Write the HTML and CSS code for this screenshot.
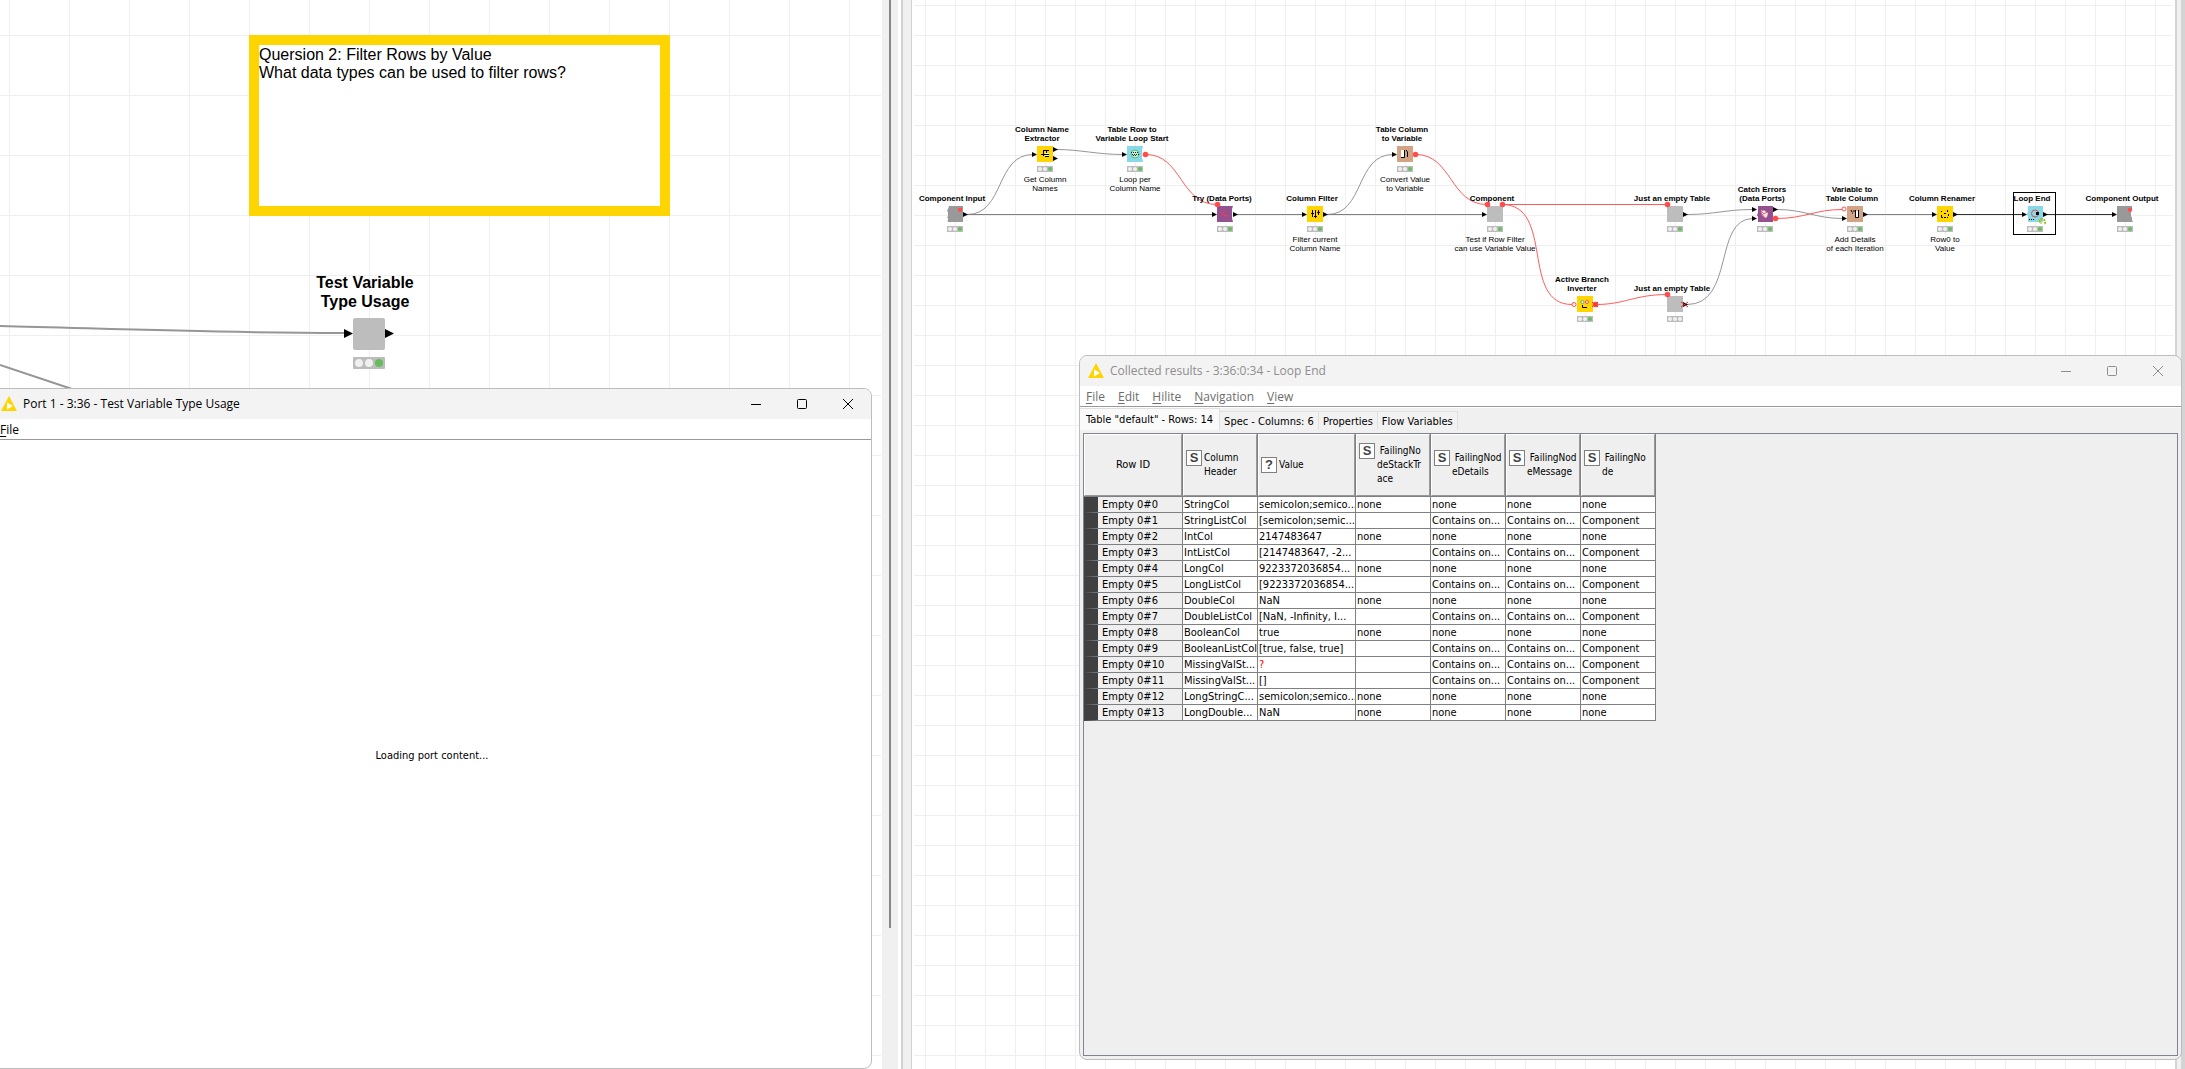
FILE: index.html
```html
<!DOCTYPE html>
<html lang="en">
<head>
<meta charset="utf-8">
<title>Workflow editor</title>
<link rel="stylesheet" href="styles.css">
</head>
<body>
<div class="desk">
  <section class="canvas canvas-left">
    <svg class="layer" aria-hidden="true">
      <g fill="none" stroke="#969696" stroke-width="2">
        <path d="M0 326 C120 329 220 333 344 333"/>
        <path d="M0 365 L72 389"/>
      </g>
      <g fill="#000"><path d="M344 329 l9 4.500 l-9 4.500z M385 329 l9 4.500 l-9 4.500z"/></g>
    </svg>
    <div class="note">Quersion 2: Filter Rows by Value<br>What data types can be used to filter rows?</div>
    <div class="node node-big" style="left:289px;top:273px">
      <div class="title">Test Variable<br>Type Usage</div>
      <div class="box"></div>
      <div class="status"><i></i><i></i><i class="on"></i></div>
    </div>
    <div class="window window-port">
      <header class="titlebar">
        <svg class="logo" viewBox="0 0 16 16"><path fill="#ffd500" d="M8 0L16 15H0z"/><path fill="#fff" d="M6 6.500l6 3.500l-6 3.500z"/></svg>
        <h1>Port 1 - 3:36 - Test Variable Type Usage</h1>
        <button aria-label="Minimize"><svg viewBox="0 0 12 12"><path d="M1 6.500h10"/></svg></button>
        <button aria-label="Maximize"><svg viewBox="0 0 12 12"><rect x="1.500" y="1.500" width="9" height="9" rx="1"/></svg></button>
        <button aria-label="Close"><svg viewBox="0 0 12 12"><path d="M1 1l10 10M11 1L1 11"/></svg></button>
      </header>
      <nav class="menu"><button><u>F</u>ile</button></nav>
      <p class="loading">Loading port content...</p>
    </div>
  </section>
  <div class="scroll"></div>
  <div class="split"></div>
  <section class="canvas canvas-right">
    <svg class="layer" viewBox="912 0 1264 1069" aria-hidden="true">
      <g fill="none" stroke="#969696">
        <path d="M967 214.500 C1005 214.500 995 154.500 1033 154.500 M1057 149.500 C1080 149.500 1097 154.500 1123 154.500"/>
        <path d="M1327 214.500 C1365 214.500 1355 154.500 1393 154.500"/>
        <path d="M1687 214.500 C1715 214.500 1725 209.500 1753 209.500 M1687 304.500 C1735 304.500 1713 218.500 1753 218.500"/>
        <path d="M1777 209.500 C1805 209.500 1815 218.500 1843 218.500"/>
      </g>
      <g fill="none" stroke="#808080">
        <path d="M967 214.500H1213 M1237 214.500H1303 M1327 214.500H1483 M1867 214.500H1933"/>
      </g>
      <path fill="none" stroke="#333" d="M1957 214.500H2023 M2047 214.500H2113"/>
      <g fill="none" stroke="#ff5a5a">
        <path d="M1146 154.500 C1182 154.500 1180 204.500 1217 204.500"/>
        <path d="M1416 154.500 C1452 154.500 1450 204.500 1487 204.500 M1502 204.500H1667 M1502 204.500 C1555 204.500 1520 304.500 1572 304.500"/>
        <path d="M1596 304.500 C1625 304.500 1635 294.500 1667 294.500 M1776 218.500 C1805 218.500 1815 209.500 1842 209.500"/>
      </g>
      <rect x="2013.500" y="192.500" width="42" height="42" fill="none" stroke="#000"/>
    </svg>

    <div class="node" style="left:-17px;top:185px"><div class="title">Component Input</div>
      <svg class="box" viewBox="0 0 16 16"><path fill="#999" d="M2 0H16V16H1Q0 15 1 14V12H0L1 10V6L0 5 1 3Z"/><path fill="#ff4d4d" d="M11 2h4v3l-2 1-2-1z"/></svg>
      <div class="status"><i></i><i></i><i class="on"></i></div></div>

    <div class="node" style="left:73px;top:125px"><div class="title">Column Name<br>Extractor</div>
      <svg class="box" viewBox="0 0 16 16"><path fill="#ffd500" d="M0 0h16v16H0z"/><path fill="#fff" d="M8 7h4v3H8z"/><path fill="none" stroke="#000" d="M6 4.500h6M6.500 4v6M4 8.500h8M9.500 4v3M8 10.500h4"/></svg>
      <div class="status"><i></i><i></i><i class="on"></i></div><div class="desc">Get Column<br>Names</div></div>

    <div class="node" style="left:163px;top:125px"><div class="title">Table Row to<br>Variable Loop Start</div>
      <svg class="box" viewBox="0 0 16 16"><path fill="#87d9e8" d="M0 0h16l-1 4v8l1 4H0z"/><circle cx="8" cy="8" r="4" fill="#c6efd9" stroke="#5ab878"/><path fill="none" stroke="#222" stroke-dasharray="1 1" d="M4 6.500h8M5 8.500h7M6 9.500h4"/></svg>
      <div class="status"><i></i><i></i><i class="on"></i></div><div class="desc">Loop per<br>Column Name</div></div>

    <div class="node" style="left:253px;top:185px"><div class="title">Try (Data Ports)</div>
      <svg class="box" viewBox="0 0 16 16"><path fill="#95508f" d="M0 0h16l-1 3v9l1 4H0z"/><path fill="none" stroke="#ff4040" d="M8 4L5 7.500Q6 10.500 11 10"/></svg>
      <div class="status"><i></i><i></i><i class="on"></i></div></div>

    <div class="node" style="left:343px;top:185px"><div class="title">Column Filter</div>
      <svg class="box" viewBox="0 0 16 16"><path fill="#ffd500" d="M0 0h16v16H0z"/><path fill="none" stroke="#000" d="M5.500 4v7M8.500 4v8M11.500 4v5M4 7.500h3M10 6.500h3M7 10.500h3"/></svg>
      <div class="status"><i></i><i></i><i class="on"></i></div><div class="desc">Filter current<br>Column Name</div></div>

    <div class="node" style="left:433px;top:125px"><div class="title">Table Column<br>to Variable</div>
      <svg class="box" viewBox="0 0 16 16"><path fill="#d2a384" d="M0 0h16v16H0z"/><path fill="#fff" d="M4 4h3v7H4z"/><path fill="none" stroke="#000" d="M7.500 4v7.500H4M9 4l1.500 2v5M10 8l1-1"/></svg>
      <div class="status"><i></i><i></i><i class="on"></i></div><div class="desc">Convert Value<br>to Variable</div></div>

    <div class="node" style="left:523px;top:185px"><div class="title">Component</div><div class="box"></div>
      <div class="status"><i></i><i></i><i class="on"></i></div><div class="desc">Test if Row Filter<br>can use Variable Value</div></div>

    <div class="node" style="left:703px;top:185px"><div class="title">Just an empty Table</div><div class="box"></div>
      <div class="status"><i></i><i></i><i class="on"></i></div></div>

    <div class="node" style="left:613px;top:275px"><div class="title">Active Branch<br>Inverter</div>
      <svg class="box" viewBox="0 0 16 16"><path fill="#ffd500" d="M0 0h16v16H0z"/><circle cx="5.500" cy="6" r="1.500" fill="#fff" stroke="#55b070"/><circle cx="10" cy="6" r="1.500" fill="#fff" stroke="#ff4d4d"/><path fill="none" stroke="#000" d="M5.500 9v2.500H10"/></svg>
      <div class="status"><i></i><i></i><i class="on"></i></div></div>

    <div class="node" style="left:703px;top:275px"><div class="title">Just an empty Table</div><div class="box"></div>
      <div class="status"><i></i><i></i><i></i></div></div>

    <div class="node" style="left:793px;top:185px"><div class="title">Catch Errors<br>(Data Ports)</div>
      <svg class="box" viewBox="0 0 16 16"><path fill="#95508f" d="M1 0h15v16H1V11l-1-2 1-2z"/><path fill="#f6e4ee" d="M4 4l2 1 1-1 2 2 2 1-1 4-2 1-3-3z"/><path fill="none" stroke="#ff5a5a" d="M4 5l3 3 3-2M5 8l3 4"/></svg>
      <div class="status"><i></i><i></i><i class="on"></i></div></div>

    <div class="node" style="left:883px;top:185px"><div class="title">Variable to<br>Table Column</div>
      <svg class="box" viewBox="0 0 16 16"><path fill="#d2a384" d="M0 0h16v16H0z"/><path fill="#fff" d="M9 5h3v6H9z"/><path fill="none" stroke="#000" d="M8.500 4v7.500h3V4M4 4l1 2M5 7h1M7 4v2"/></svg>
      <div class="status"><i></i><i></i><i class="on"></i></div><div class="desc">Add Details<br>of each Iteration</div></div>

    <div class="node" style="left:973px;top:185px"><div class="title">Column Renamer</div>
      <svg class="box" viewBox="0 0 16 16"><path fill="#ffd500" d="M0 0h16v16H0z"/><path fill="none" stroke="#000" d="M4 5.500h1M4.500 9v2.500H6M7 11.500h2M10 11.500h1M11.500 8v2M7 7.500h2M10.500 4v2"/></svg>
      <div class="status"><i></i><i></i><i class="on"></i></div><div class="desc">Row0 to<br>Value</div></div>

    <div class="node" style="left:1063px;top:185px"><div class="title">Loop End</div>
      <svg class="box" viewBox="0 0 16 16"><path fill="#87d9e8" d="M1 0h15v16H1V11l-1-3 1-3z"/><circle cx="8" cy="7.500" r="3.500" fill="#87d9e8" stroke="#e84c4c"/><path fill="#000" d="M9 6h3v3H9zM2 13h1v1H2zM4 13h1v1H4zM6 13h1v1H6z"/></svg>
      <div class="status"><i></i><i></i><i class="on"></i></div></div>

    <div class="node" style="left:1153px;top:185px"><div class="title">Component Output</div>
      <svg class="box" viewBox="0 0 16 16"><path fill="#999" d="M0 0H15V3L14 6V10L15 12V14L16 16H0Z"/><path fill="#ff4d4d" d="M11 2h4v3l-2 1-2-1z"/></svg>
      <div class="status"><i></i><i></i><i class="on"></i></div></div>

    <svg class="layer" viewBox="912 0 1264 1069" aria-hidden="true">
      <defs><path id="t" d="M0 -2.500L5 0L0 2.500z"/></defs>
      <g fill="#000">
        <use href="#t" x="963" y="214.500"/><use href="#t" x="1032" y="154.500"/><use href="#t" x="1053" y="149.500"/><use href="#t" x="1053" y="158.500"/>
        <use href="#t" x="1122" y="154.500"/><use href="#t" x="1212" y="214.500"/><use href="#t" x="1233" y="214.500"/><use href="#t" x="1302" y="214.500"/>
        <use href="#t" x="1323" y="214.500"/><use href="#t" x="1392" y="154.500"/><use href="#t" x="1482" y="214.500"/><use href="#t" x="1683" y="214.500"/>
        <use href="#t" x="1683" y="304.500"/><use href="#t" x="1752" y="209.500"/><use href="#t" x="1752" y="218.500"/><use href="#t" x="1773" y="209.500"/>
        <use href="#t" x="1842" y="218.500"/><use href="#t" x="1863" y="214.500"/><use href="#t" x="1932" y="214.500"/><use href="#t" x="1953" y="214.500"/>
        <use href="#t" x="2022" y="214.500"/><use href="#t" x="2043" y="214.500"/><use href="#t" x="2112" y="214.500"/>
      </g>
      <g fill="#ff4d4d">
        <circle cx="1145.500" cy="154.500" r="2.800"/><circle cx="1217.500" cy="204.500" r="2.800"/><circle cx="1415.500" cy="154.500" r="2.800"/>
        <circle cx="1487.500" cy="204.500" r="2.800"/><circle cx="1502.500" cy="204.500" r="2.800"/><circle cx="1667.500" cy="204.500" r="2.800"/>
        <circle cx="1595.500" cy="304.500" r="2.800"/><circle cx="1667.500" cy="294.500" r="2.800"/><circle cx="1775.500" cy="218.500" r="2.800"/>
      </g>
      <g fill="#fff" stroke="#ff4d4d"><circle cx="1574" cy="304.500" r="2"/><circle cx="1844" cy="209" r="2"/></g>
      <path stroke="#e03030" d="M1592 302l6 5M1598 302l-6 5M1681 302l7 5M1688 302l-7 5"/>
      <path fill="none" stroke="#a4bd1c" stroke-width="2" stroke-dasharray="2 1" d="M2040 222q-1-3 2-3q3 0 3 4"/>
      <path fill="none" stroke="#a4bd1c" d="M2039 221l1 2h2M2044 224l2-1"/>
    </svg>
  </section>
  <div class="edge"></div>

  <div class="window window-table">
    <header class="titlebar">
      <svg class="logo" viewBox="0 0 16 16"><path fill="#ffd500" d="M8 0L16 15H0z"/><path fill="#fff" d="M6 6.500l6 3.500l-6 3.500z"/></svg>
      <h1>Collected results - 3:36:0:34 - Loop End</h1>
      <button aria-label="Minimize"><svg viewBox="0 0 12 12"><path d="M1 6.500h10"/></svg></button>
      <button aria-label="Maximize"><svg viewBox="0 0 12 12"><rect x="1.500" y="1.500" width="9" height="9" rx="1"/></svg></button>
      <button aria-label="Close"><svg viewBox="0 0 12 12"><path d="M1 1l10 10M11 1L1 11"/></svg></button>
    </header>
    <nav class="menu"><button><u>F</u>ile</button><button><u>E</u>dit</button><button><u>H</u>ilite</button><button><u>N</u>avigation</button><button><u>V</u>iew</button></nav>
    <div class="tabs" role="tablist">
      <button class="tab active" role="tab" aria-selected="true">Table "default" - Rows: 14</button><button class="tab" role="tab">Spec - Columns: 6</button><button class="tab" role="tab">Properties</button><button class="tab" role="tab">Flow Variables</button>
    </div>
    <div class="pane">
      <table>
        <colgroup><col class="c-id"><col class="c-std"><col class="c-val"><col class="c-std"><col class="c-std"><col class="c-std"><col class="c-std"></colgroup>
        <thead><tr>
          <th><div>Row ID</div></th>
          <th><div><p><b>S</b><span>Column<br>Header</span></p></div></th>
          <th><div><p><b>?</b><span>Value</span></p></div></th>
          <th><div><p><b>S</b><span>&nbsp;FailingNo<br>deStackTr<br>ace</span></p></div></th>
          <th><div><p><b>S</b><span>&nbsp;FailingNod<br>eDetails</span></p></div></th>
          <th><div><p><b>S</b><span>&nbsp;FailingNod<br>eMessage</span></p></div></th>
          <th><div><p><b>S</b><span>&nbsp;FailingNo<br>de</span></p></div></th>
        </tr></thead>
        <tbody>
          <tr><th>Empty 0#0</th><td>StringCol</td><td>semicolon;semico...</td><td>none</td><td>none</td><td>none</td><td>none</td></tr>
          <tr><th>Empty 0#1</th><td>StringListCol</td><td>[semicolon;semic...</td><td></td><td>Contains on...</td><td>Contains on...</td><td>Component</td></tr>
          <tr><th>Empty 0#2</th><td>IntCol</td><td>2147483647</td><td>none</td><td>none</td><td>none</td><td>none</td></tr>
          <tr><th>Empty 0#3</th><td>IntListCol</td><td>[2147483647, -2...</td><td></td><td>Contains on...</td><td>Contains on...</td><td>Component</td></tr>
          <tr><th>Empty 0#4</th><td>LongCol</td><td>9223372036854...</td><td>none</td><td>none</td><td>none</td><td>none</td></tr>
          <tr><th>Empty 0#5</th><td>LongListCol</td><td>[9223372036854...</td><td></td><td>Contains on...</td><td>Contains on...</td><td>Component</td></tr>
          <tr><th>Empty 0#6</th><td>DoubleCol</td><td>NaN</td><td>none</td><td>none</td><td>none</td><td>none</td></tr>
          <tr><th>Empty 0#7</th><td>DoubleListCol</td><td>[NaN, -Infinity, I...</td><td></td><td>Contains on...</td><td>Contains on...</td><td>Component</td></tr>
          <tr><th>Empty 0#8</th><td>BooleanCol</td><td>true</td><td>none</td><td>none</td><td>none</td><td>none</td></tr>
          <tr><th>Empty 0#9</th><td>BooleanListCol</td><td>[true, false, true]</td><td></td><td>Contains on...</td><td>Contains on...</td><td>Component</td></tr>
          <tr><th>Empty 0#10</th><td>MissingValSt...</td><td class="missing">?</td><td></td><td>Contains on...</td><td>Contains on...</td><td>Component</td></tr>
          <tr><th>Empty 0#11</th><td>MissingValSt...</td><td>[]</td><td></td><td>Contains on...</td><td>Contains on...</td><td>Component</td></tr>
          <tr><th>Empty 0#12</th><td>LongStringC...</td><td>semicolon;semico...</td><td>none</td><td>none</td><td>none</td><td>none</td></tr>
          <tr><th>Empty 0#13</th><td>LongDouble...</td><td>NaN</td><td>none</td><td>none</td><td>none</td><td>none</td></tr>
        </tbody>
      </table>
    </div>
  </div>
</div>
</body>
</html>
```
FILE: styles.css
```css
* { box-sizing: border-box; }
body { margin: 0; font: 12px/16px "Open Sans", "Noto Sans", sans-serif; color: #000; background: #fff; }
button { font: inherit; color: inherit; border: 0; padding: 0; background: none; }
.desk { position: relative; display: flex; height: 100vh; overflow: hidden; }

/* Workflow canvases */
.canvas {
  position: relative;
  overflow: hidden;
  background-image: linear-gradient(90deg, #efefef 1px, transparent 1px), linear-gradient(#efefef 1px, transparent 1px);
}
.canvas-left { flex: 0 0 881px; background-size: 60px 60px; background-position: 9px 35px; }
.canvas-right {
  flex: 1;
  border: solid #fff;
  border-width: 0 2px;
  background-size: 30px 30px;
  background-position: 11px 5px;
}
.layer { position: absolute; top: 0; left: 0; width: 881px; height: 1069px; }
.canvas-right .layer { left: -2px; width: 1264px; }
.canvas-right .node { margin-left: -2px; }
.scroll { flex: 0 0 17px; border-left: 1px solid #fff; background: linear-gradient(#888, #888) 7px 0 / 2px 928px no-repeat #f0f0f0; }
.split { flex: 0 0 11px; margin-left: 3px; border: solid #d2d2d2; border-width: 0 1px 0 2px; background: #f0f0f0; }
.edge { flex: 0 0 10px; background: #f0f0f0; border: solid #d4d4d4; border-width: 0 4px 0 2px; }

.note { position: absolute; left: 249px; top: 35px; width: 421px; height: 181px; padding-top: 1px; border: 10px solid #ffd500; background: #fff; font: 16px/18px "Liberation Sans", Arial, sans-serif; white-space: nowrap; }

.node { position: absolute; width: 120px; display: flex; flex-direction: column; align-items: center; font: 8px/9px "Liberation Sans", Arial, sans-serif; text-align: center; white-space: nowrap; }
.title { height: 21px; padding: 0 6px 3px 0; display: flex; align-items: flex-end; font-weight: bold; }
.box { width: 16px; height: 16px; background: #bcbdbc; }
svg.box { background: none; display: block; }
.status { display: flex; justify-content: space-evenly; align-items: center; width: 16px; height: 6px; margin-top: 4px; background: #bcbcbc; }
.status i { width: 4px; height: 4px; border-radius: 50%; background: #f0f0f0; }
.status i.on { background: #65bd5c; }
.desc { margin-top: 3px; }
.node-big { width: 160px; font-size: 16px; line-height: 19px; }
.node-big .title { height: 45px; padding: 0 8px 7px 0; }
.node-big .box { width: 32px; height: 32px; border-radius: 2px; }
.node-big .status { width: 32px; height: 12px; margin-top: 7px; border-radius: 1px; }
.node-big .status i { width: 8px; height: 8px; }

/* Windows */
.window { position: absolute; display: flex; flex-direction: column; border: 1px solid #bdbdbd; border-radius: 8px; overflow: hidden; background: #fff; }
.window-port { left: -8px; right: 9px; top: 388px; bottom: 0; }
.window-table { left: 1079px; right: 3px; top: 355px; bottom: 9px; color: #6c6c6c; background: #f0f0f0; }
.titlebar { display: flex; align-items: center; flex: 0 0 30px; background: #f3f3f3; padding-left: 8px; }
.titlebar h1 { flex: 1; margin: 0 0 0 6px; font-size: 12px; font-weight: normal; }
.logo { width: 16px; height: 16px; }
.titlebar button { width: 46px; height: 30px; display: grid; place-items: center; }
.titlebar button svg { width: 12px; height: 12px; fill: none; stroke: currentColor; }
.window-table h1, .window-table .titlebar button { color: #8e8e8e; }
.menu { display: flex; gap: 13px; flex: 0 0 21px; padding: 2px 0 0 6px; border-bottom: 1px solid #999; background: #fff; }
.window-port .menu { padding-left: 7px; }
.menu u { text-underline-offset: 2px; }
.loading { flex: 1; display: grid; place-items: center; margin: 0; padding-top: 3px; }

.tabs, .pane, .loading { font: 11px/14px "DejaVu Sans Condensed", "DejaVu Sans", sans-serif; color: #000; }
.tabs { display: flex; align-items: flex-end; flex: 0 0 23px; border-top: 1px solid #fff; background: #f0f0f0; }
.tab { height: 19px; padding: 1px 4px 0; border: solid #e0e0e0; border-width: 1px 1px 0 0; background: #f2f2f2; white-space: nowrap; }
.tab.active { height: 22px; padding: 0 6px; background: #fafafa; }
.pane { flex: 1; margin: 3px; border: 1px solid #7f858f; background: #efefef; overflow: hidden; }

table { table-layout: fixed; border-collapse: separate; border-spacing: 0; width: 572px; }
.c-id { width: 99px; }
.c-std { width: 75px; }
.c-val { width: 98px; }
thead th { height: 63px; padding: 0; font-weight: normal; border: solid #808080; border-width: 0 1px 1px 0; }
thead th div { display: flex; align-items: center; height: 62px; border: 1px solid #fff; border-color: #fff #999 #999 #fff; padding-left: 2px; text-align: left; white-space: nowrap; }
thead th:first-child div { justify-content: center; padding: 0; }
thead p { display: flex; gap: 2px; margin: 0; font-size: 10px; }
thead b { flex: none; width: 16px; height: 16px; margin-top: -1px; border: 1px solid #808080; background: #fff; color: #444; font: bold 13px/14px "Liberation Sans", sans-serif; text-align: center; }
tbody th, tbody td { height: 16px; padding: 0 0 0 1px; border: solid #808080; border-width: 0 1px 1px 0; background: #fff; line-height: 15px; font-weight: normal; text-align: left; white-space: nowrap; overflow: hidden; }
tbody th { background: #efefef; border-left: 14px solid #404040; padding-left: 4px; }
td.missing { color: #f00; }
```
